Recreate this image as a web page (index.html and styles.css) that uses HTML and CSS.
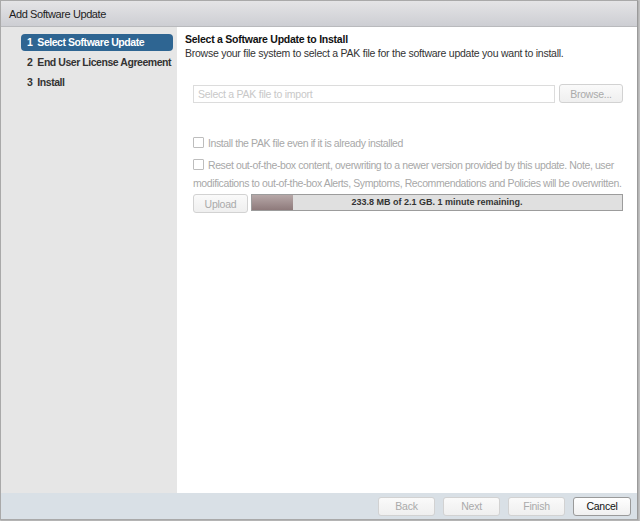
FILE: index.html
```html
<!DOCTYPE html>
<html lang="en">

<head>
  <meta charset="UTF-8">
  <meta name="viewport" content="width=device-width, initial-scale=1.0">
  <title>Add Software Update</title>
  <link rel="stylesheet" href="styles.css">
</head>

<body>
<div class="dialog">

  <!-- title bar -->
  <div class="titlebar">Add Software Update</div>

  <div class="dialog-body">

    <!-- wizard steps -->
    <ul class="steps">
      <li class="step active">1&nbsp; Select Software Update</li>
      <li class="step">2&nbsp; End User License Agreement</li>
      <li class="step">3&nbsp; Install</li>
    </ul>

    <!-- step content -->
    <div class="content">
      <h2 class="heading">Select a Software Update to Install</h2>
      <p class="desc">Browse your file system to select a PAK file for the software update you want to install.</p>

      <div class="file-row">
        <input class="file-input" type="text" placeholder="Select a PAK file to import" disabled>
        <button class="btn" disabled>Browse...</button>
      </div>

      <label class="option">
        <span class="box"></span>Install the PAK file even if it is already installed
      </label>
      <label class="option">
        <span class="box"></span>Reset out-of-the-box content, overwriting to a newer version provided by this update. Note, user modifications to out-of-the-box Alerts, Symptoms, Recommendations and Policies will be overwritten.
      </label>

      <div class="upload-row">
        <button class="btn upload" disabled>Upload</button>
        <div class="progress">
          <div class="progress-fill" style="width: 11%"></div>
          <span class="progress-text">233.8 MB of 2.1 GB. 1 minute remaining.</span>
        </div>
      </div>
    </div>

  </div>

  <!-- footer buttons -->
  <div class="footer">
    <button class="btn footer-btn" disabled>Back</button>
    <button class="btn footer-btn" disabled>Next</button>
    <button class="btn footer-btn" disabled>Finish</button>
    <button class="btn footer-btn cancel">Cancel</button>
  </div>

</div>
</body>

</html>
```

FILE: styles.css
```css
*,
*::before,
*::after {
  box-sizing: border-box;
}

body {
  margin: 0;
  width: 640px;
  height: 521px;
  background: #c4c4c4;
  font-family: "Liberation Sans", Arial, sans-serif;
  font-size: 10.5px;
  letter-spacing: -0.25px;
  color: #222;
}

.dialog {
  width: 638px;
  height: 520px;
  border: 1px solid #a9a9a9;
  border-right-color: #9a9a9a;
  background: #fff;
  display: flex;
  flex-direction: column;
  box-shadow: 1px 1px 1px #b4b4b4;
}

.titlebar {
  height: 26px;
  flex: none;
  padding-left: 8px;
  line-height: 26px;
  font-size: 11px;
  letter-spacing: -0.4px;
  color: #1e1e1e;
  background: linear-gradient(#e4e4e6, #cdced3);
  border-bottom: 1px solid #b9babd;
}

.dialog-body {
  flex: 1;
  display: flex;
  min-height: 0;
}

/* steps */

.steps {
  width: 176px;
  flex: none;
  margin: 0;
  padding: 7px 4px 0 20px;
  list-style: none;
  background: #e6e6e6;
  display: flex;
  flex-direction: column;
  gap: 3px;
}

.step {
  height: 17px;
  line-height: 17px;
  padding-left: 6px;
  font-weight: bold;
  letter-spacing: -0.45px;
  white-space: nowrap;
  color: #333;
  border-radius: 4px;
}

.step.active {
  background: #2e6592;
  color: #fff;
}

/* content */

.content {
  flex: 1;
  padding: 5px 14px 0 8px;
}

.heading {
  margin: 0;
  font-size: 10.5px;
  line-height: 14px;
  font-weight: bold;
  color: #111;
}

.desc {
  margin: 0;
  line-height: 14px;
  color: #333;
}

.file-row {
  display: flex;
  gap: 4px;
  margin: 24px 0 0 8px;
  align-items: flex-start;
}

.file-input {
  flex: 1;
  height: 18px;
  margin: 1px 0 0;
  padding: 0 4px;
  border: 1px solid #dcdcdc;
  background: #fff;
  font: inherit;
  letter-spacing: inherit;
}

.file-input::placeholder {
  color: #c8c8c8;
}

.btn {
  height: 19px;
  padding: 0;
  font: inherit;
  font-size: 10.5px;
  letter-spacing: inherit;
  color: #aaa;
  background: linear-gradient(#fafafa, #efefef);
  border: 1px solid #d2d2d2;
  border-radius: 3px;
}

.file-row .btn {
  width: 64px;
}

.option {
  display: block;
  margin: 0 0 0 8px;
  line-height: 18px;
  letter-spacing: -0.4px;
  color: #a8a8a8;
}

.option:first-of-type {
  margin-top: 31px;
}

.option + .option {
  margin-top: 4px;
}

.box {
  display: inline-block;
  width: 11px;
  height: 11px;
  margin-right: 4px;
  vertical-align: -1px;
  border: 1px solid #bdbdbd;
  background: #fff;
  border-radius: 1px;
}

.upload-row {
  display: flex;
  gap: 3px;
  margin: 2px 0 0 8px;
}

.upload {
  width: 55px;
}

.progress {
  position: relative;
  flex: 1;
  height: 17px;
  border: 1px solid #9c9c9c;
  background: #e0e0e0;
}

.progress-fill {
  height: 100%;
  background: linear-gradient(#b7a8a8, #8e7a7b);
}

.progress-text {
  position: absolute;
  inset: 0;
  text-align: center;
  line-height: 15px;
  font-size: 9px;
  letter-spacing: 0;
  font-weight: bold;
  color: #333;
}

/* footer */

.footer {
  height: 26px;
  flex: none;
  display: flex;
  justify-content: flex-end;
  align-items: center;
  gap: 8px;
  padding-right: 6px;
  background: #d9e0e6;
}

.footer-btn {
  width: 57px;
}

.cancel {
  width: 58px;
  color: #111;
  border-color: #9a9a9a;
  background: linear-gradient(#ffffff, #f0f0f0);
}
```
